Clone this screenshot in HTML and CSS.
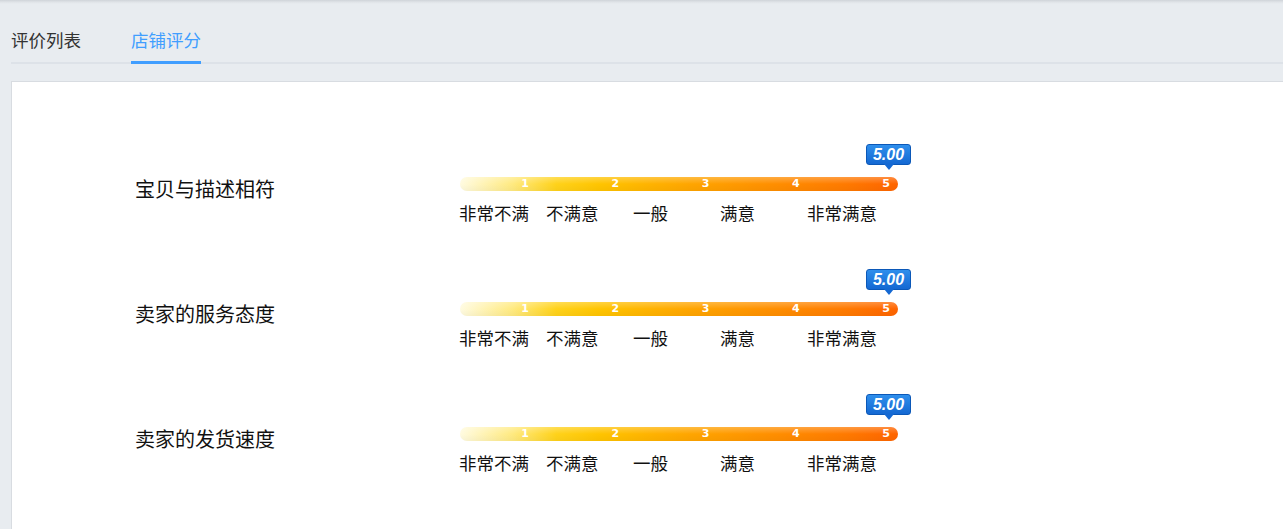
FILE: index.html
```html
<!DOCTYPE html>
<html lang="zh-CN">
<head>
<meta charset="utf-8">
<title>店铺评分</title>
<link rel="stylesheet" href="styles.css">
</head>
<body>
<div class="page">
  <div class="tabs">
    <div class="tab">评价列表</div>
    <div class="tab active">店铺评分</div>
  </div>
  <div class="panel">
    <div class="row">
      <div class="label">宝贝与描述相符</div>
      <div class="scale">
        <div class="badge-wrap"><div class="badge">5.00</div></div>
        <div class="bar"><span>1</span><span>2</span><span>3</span><span>4</span><span>5</span></div>
        <div class="levels"><span>非常不满</span><span>不满意</span><span>一般</span><span>满意</span><span>非常满意</span></div>
      </div>
    </div>
    <div class="row">
      <div class="label">卖家的服务态度</div>
      <div class="scale">
        <div class="badge-wrap"><div class="badge">5.00</div></div>
        <div class="bar"><span>1</span><span>2</span><span>3</span><span>4</span><span>5</span></div>
        <div class="levels"><span>非常不满</span><span>不满意</span><span>一般</span><span>满意</span><span>非常满意</span></div>
      </div>
    </div>
    <div class="row">
      <div class="label">卖家的发货速度</div>
      <div class="scale">
        <div class="badge-wrap"><div class="badge">5.00</div></div>
        <div class="bar"><span>1</span><span>2</span><span>3</span><span>4</span><span>5</span></div>
        <div class="levels"><span>非常不满</span><span>不满意</span><span>一般</span><span>满意</span><span>非常满意</span></div>
      </div>
    </div>
  </div>
</div>
</body>
</html>
```
FILE: styles.css
```css
html, body {
  margin: 0;
  padding: 0;
  height: 100%;
  overflow: hidden;
}
body {
  font-family: "Noto Sans CJK SC", "Liberation Sans", sans-serif;
  color: #222;
  background: #e8ecf0;
}
.page {
  min-height: 100%;
  background: linear-gradient(#cfd4d9 0px, #dfe3e7 2px, #e8ecf0 4px, #e8ecf0 100%);
}
.tabs {
  display: flex;
  gap: 50px;
  margin-left: 11px;
  padding-top: 28px;
  border-bottom: 2px solid #dde2e8;
}
.tab {
  font-size: 17.5px;
  line-height: 24px;
  width: 70px;
  padding-bottom: 9px;
  border-bottom: 3px solid transparent;
  margin-bottom: -2px;
  color: #333;
  white-space: nowrap;
}
.tab.active {
  color: #409eff;
  border-bottom-color: #409eff;
}
.panel {
  margin-top: 17px;
  margin-left: 11px;
  background: #fff;
  border-top: 1px solid #d8dce1;
  border-left: 1px solid #d8dce1;
  height: 460px;
  padding-top: 62px;
  box-sizing: border-box;
  display: flex;
  flex-direction: column;
  gap: 44px;
}
.row {
  display: flex;
}
.label {
  width: 325px;
  padding-left: 123px;
  padding-top: 31px;
  font-size: 20px;
  line-height: 28px;
  color: #111;
  white-space: nowrap;
}
.scale {
  width: 438px;
  display: flex;
  flex-direction: column;
}
.badge-wrap {
  height: 26px;
  display: flex;
  justify-content: flex-end;
  margin-right: -13px;
  margin-bottom: 6px;
}
.badge {
  position: relative;
  width: 45px;
  height: 21px;
  box-sizing: border-box;
  border: 1px solid #0b58b8;
  border-radius: 3px;
  background: linear-gradient(#2f8fec, #1468d2);
  color: #fff;
  font-family: "Liberation Sans", Arial, sans-serif;
  font-weight: bold;
  font-style: italic;
  font-size: 16px;
  line-height: 19px;
  text-align: center;
}
.badge::after {
  content: "";
  position: absolute;
  left: 17px;
  top: 19px;
  border-left: 5px solid transparent;
  border-right: 5px solid transparent;
  border-top: 6px solid #1468d2;
}
.bar {
  height: 14px;
  margin-top: 1px;
  border-radius: 7px;
  background:
    linear-gradient(rgba(255,255,255,0.25), rgba(255,255,255,0) 50%, rgba(0,0,0,0.03)),
    linear-gradient(to right, #fffbe0 0%, #ffea80 12%, #ffd21a 22%, #ffc400 32%, #ffa600 52%, #ff8e00 72%, #ff7a00 88%, #ff6400 100%);
  display: grid;
  grid-template-columns: repeat(5, 90.25px);
  padding-left: 20px;
  box-sizing: border-box;
  overflow: hidden;
}
.bar span {
  text-align: center;
  color: #fff;
  font-family: "DejaVu Sans", sans-serif;
  font-weight: bold;
  font-size: 11px;
  line-height: 14px;
}
.levels {
  margin-top: 10px;
  margin-left: -1px;
  display: grid;
  grid-template-columns: repeat(5, 87px);
  font-size: 17.5px;
  line-height: 24px;
  color: #111;
  white-space: nowrap;
}
```
